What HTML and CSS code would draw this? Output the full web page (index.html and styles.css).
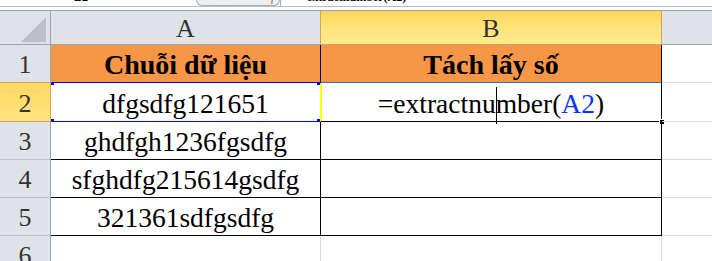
FILE: index.html
```html
<!DOCTYPE html>
<html lang="vi">
<head>
<meta charset="utf-8">
<title>Excel</title>
<link rel="stylesheet" href="styles.css">
</head>
<body>
<div class="topbar">
  <div class="namebox"><span class="peek">B2</span></div>
  <div class="fxbtn"><span class="peek icons">✕ ✓ <i>fx</i></span></div>
  <div class="formula"><span class="peek">=extractnumber(A2)</span></div>
</div>
<div class="gap"></div>
<div class="sheet">
  <div class="corner"><svg class="tri" width="25" height="25" viewBox="0 0 25 25"><polygon points="25,0 25,25 0,25" fill="#bdc1c5"/></svg></div>
  <div class="colhead nextsel">A</div>
  <div class="colhead sel">B</div>
  <div class="colhead rest"></div>

  <div class="rowhead abovesel">1</div>
  <div class="cell title a1">Chuỗi dữ liệu</div>
  <div class="cell title b1">Tách lấy số</div>
  <div class="cell blank"></div>

  <div class="rowhead sel">2</div>
  <div class="cell a2">dfgsdfg121651<i class="sq tl"></i><i class="sq bl"></i><i class="sq tr"></i><i class="sq br"></i></div>
  <div class="cell b2">=extractnu<span class="caret"></span>mber(<span class="ref">A2</span>)<i class="handle"></i></div>
  <div class="cell blank"></div>

  <div class="rowhead">3</div>
  <div class="cell">ghdfgh1236fgsdfg</div>
  <div class="cell"></div>
  <div class="cell blank"></div>

  <div class="rowhead">4</div>
  <div class="cell">sfghdfg215614gsdfg</div>
  <div class="cell"></div>
  <div class="cell blank"></div>

  <div class="rowhead">5</div>
  <div class="cell">321361sdfgsdfg</div>
  <div class="cell"></div>
  <div class="cell blank"></div>

  <div class="rowhead">6</div>
  <div class="cell empty"></div>
  <div class="cell empty"></div>
  <div class="cell empty last"></div>
</div>
</body>
</html>
```

FILE: styles.css
```css
* { box-sizing: border-box; }
html, body { margin: 0; padding: 0; }
body {
  width: 712px;
  height: 261px;
  overflow: hidden;
  background: #fff;
  font-family: "Liberation Serif", "Times New Roman", serif;
}

/* formula bar remnant */
.topbar {
  display: flex;
  height: 7px;
  border-bottom: 1px solid #b6bbc1;
}
.namebox {
  width: 196px;
  height: 6px;
  overflow: hidden;
  padding-left: 74px;
}
.fxbtn {
  width: 84px;
  height: 6px;
  overflow: hidden;
  background: #eceef0;
  border: 1px solid #a9adb2;
  border-top: none;
  border-radius: 0 0 9px 9px;
  padding-left: 24px;
}
.formula {
  flex: 1;
  height: 6px;
  overflow: hidden;
  border-left: 1px solid #a9adb2;
  padding-left: 19px;
}
.peek {
  display: block;
  font: bold 12px/12px "Liberation Serif", serif;
  margin-top: -9px;
  color: #000;
  white-space: nowrap;
}
.icons { color: #6b6f74; letter-spacing: 6px; font-weight: normal; }
.gap {
  height: 4px;
  border-bottom: 1px solid #9ba1a8;
}

/* sheet grid */
.sheet {
  display: grid;
  grid-template-columns: 51px 270px 341px 1fr;
  grid-template-rows: 34px 38px 39px 38px 38px 38px 38px;
}

.corner {
  background: #dfe3e8;
  border-right: 1px solid #9ea4ab;
  border-bottom: 1px solid #9ea4ab;
  display: flex;
  justify-content: flex-end;
  align-items: flex-end;
  padding: 0 4px 2px 0;
}
.tri { display: block; }

.colhead {
  background: #dfe3e8;
  border-right: 1px solid #9ea4ab;
  border-bottom: 1px solid #9ea4ab;
  color: #333;
  font-size: 26px;
  line-height: 26px;
  display: flex;
  justify-content: center;
  align-items: flex-end;
  padding-bottom: 2px;
}
.colhead.nextsel { border-right-color: #d2a656; }
.colhead.sel {
  background: linear-gradient(#ffd659 0%, #ffe277 45%, #ffec8e 100%);
  border-right-color: #d2a656;
  border-bottom-color: #d2a656;
}
.colhead.rest { border-right: none; }

.rowhead {
  background: #dfe3e8;
  border-right: 1px solid #9ea4ab;
  border-bottom: 1px solid #babfc5;
  color: #333;
  font-size: 26px;
  line-height: 26px;
  display: flex;
  justify-content: center;
  align-items: flex-end;
  padding-bottom: 4px;
}
.rowhead.abovesel { border-bottom-color: #d2a656; }
.rowhead.sel {
  background: linear-gradient(#ffd860, #ffe482);
  border-right-color: #d2a656;
  border-bottom-color: #d2a656;
}

.cell {
  position: relative;
  display: flex;
  justify-content: center;
  align-items: flex-end;
  padding-bottom: 4px;
  font-size: 27.5px;
  line-height: 27px;
  color: #000;
  white-space: nowrap;
  border-right: 1px solid #000;
  border-bottom: 1px solid #000;
}
.title {
  background: #f79646;
  font-weight: bold;
  font-size: 28px;
}
.a1 { border-bottom-color: #0000ff; }
.b1 { border-bottom-color: #2f72c4; }
.a2 {
  border-right-color: #ffff00;
  border-bottom-color: #0000ff;
}
.b2 { box-shadow: inset 1px 0 0 #ffff00; }
.blank {
  border-right: none;
  border-bottom: 1px solid #d9dbdd;
}
.empty {
  border-bottom: none;
  border-right: 1px solid #d9dbdd;
}
.empty.last { border-right: none; }

.ref { color: #0a35ff; }

.sq {
  position: absolute;
  width: 3px;
  height: 3px;
  background: #0000ff;
}
.sq.tl { left: 0; top: -1px; }
.sq.bl { left: 0; bottom: -1px; }
.sq.tr { right: 0; top: -1px; }
.sq.br { right: 0; bottom: -1px; }

.caret {
  position: relative;
  display: inline-block;
  width: 0;
  height: 0;
}
.caret::before {
  content: "";
  position: absolute;
  left: 0;
  bottom: -7px;
  width: 1px;
  height: 37px;
  background: #000;
}

.handle {
  position: absolute;
  right: -3px;
  bottom: -3px;
  width: 5px;
  height: 5px;
  background: #000;
  border: 1px solid #fff;
  border-width: 1px 0 0 1px;
}
```
